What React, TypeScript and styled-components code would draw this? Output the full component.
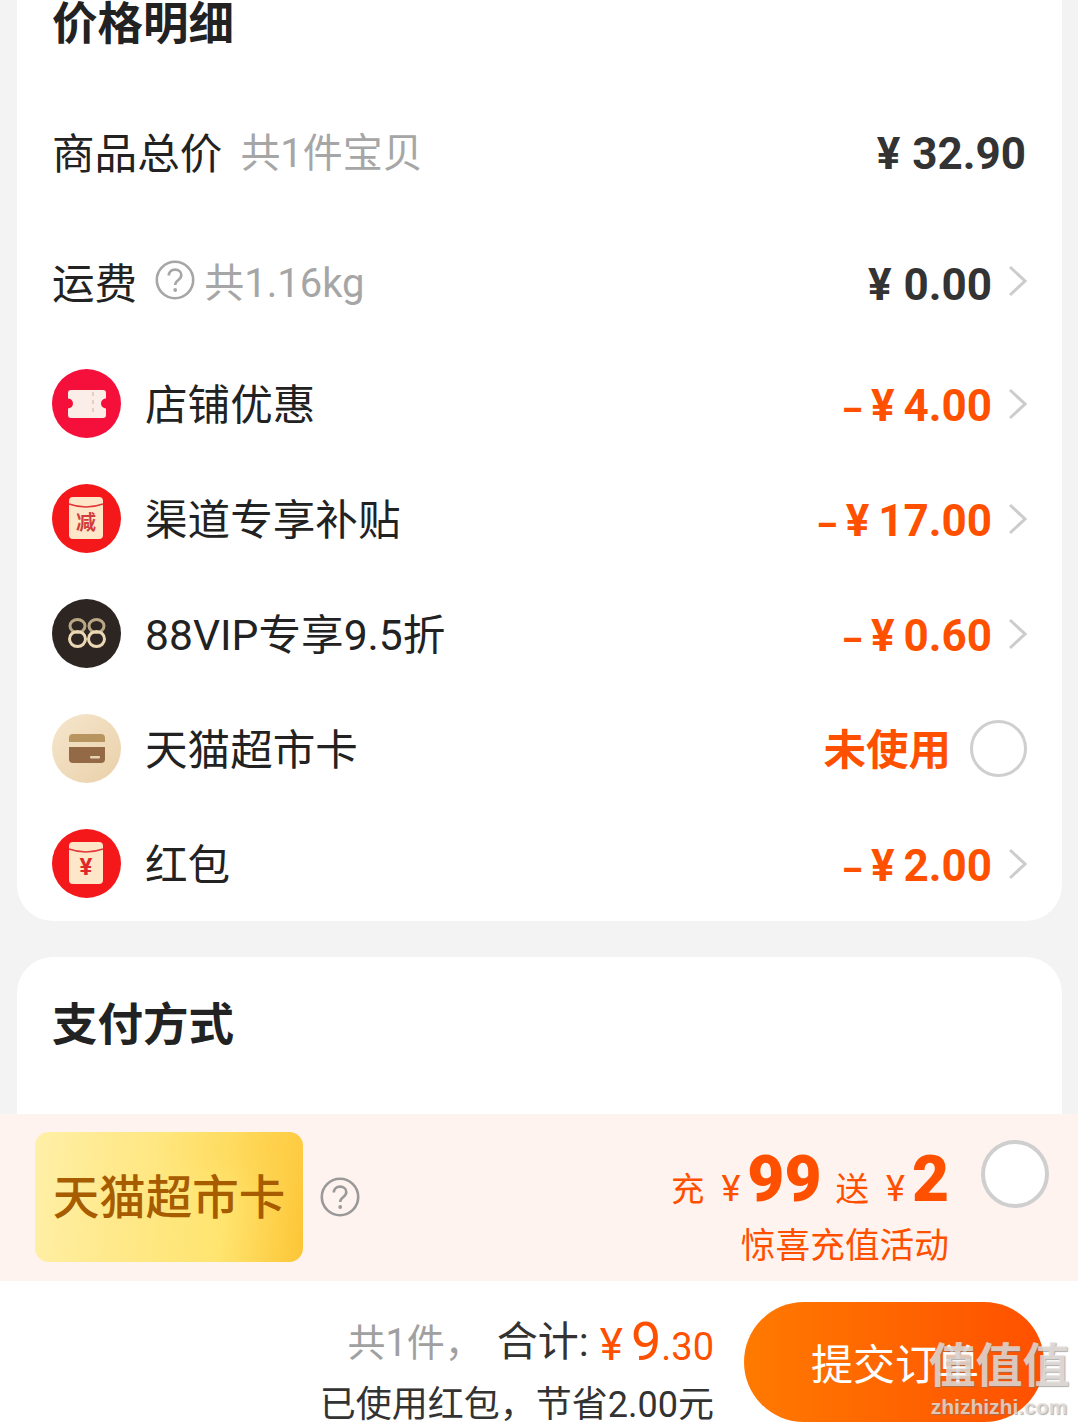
import React from "react";
import styled, { createGlobalStyle } from "styled-components";

const FONT = `Roboto, "Noto Sans CJK SC", sans-serif`;
const ORANGE = "#ff5000";

const GlobalStyle = createGlobalStyle`
  html, body { margin: 0; padding: 0; background: #f3f3f3; }
  * { box-sizing: border-box; }
`;

const Page = styled.div`
  position: relative;
  width: 1078px;
  height: 1424px;
  overflow: hidden;
  display: flex;
  flex-direction: column;
  font-family: ${FONT};
  background: #f3f3f3;
`;

const Scroll = styled.div`
  height: 1114px;
  flex: none;
  padding: 0 16px 0 17px;
  overflow: hidden;
  display: flex;
  flex-direction: column;
  gap: 36px;
`;

const PriceCard = styled.section`
  background: #fff;
  height: 921px;
  flex: none;
  border-radius: 0 0 36px 36px;
  padding: 0 36px 0 35px;
`;

const PayCard = styled.section`
  background: #fff;
  flex: 1;
  border-radius: 36px 36px 0 0;
  padding: 44px 36px 0 35px;
`;

const Title = styled.h2`
  margin: 0;
  padding-top: 4px;
  font-size: 45.5px;
  line-height: 42px;
  font-weight: 700;
  color: #222;
`;

const TopRow = styled.div<{ $top: number }>`
  height: 100px;
  margin-top: ${(p) => p.$top}px;
  display: flex;
  align-items: center;
`;

const Discounts = styled.div`
  margin-top: 13px;
`;

const Row = styled.div`
  height: 115px;
  display: flex;
  align-items: center;
`;

const Label = styled.span`
  font-size: 42.6px;
  line-height: 50px;
  margin-top: 2px;
  color: #222;
  font-weight: 400;
  white-space: nowrap;
`;

const RowLabel = styled(Label)`
  margin-top: 2px;
`;

const Note = styled.span`
  font-size: 40px;
  line-height: 50px;
  margin-top: 2px;
  color: #a6a6a6;
  white-space: nowrap;
  margin-left: 18px;
`;

const NoteTight = styled(Note)`
  margin-left: 9px;
`;

const IconSlot = styled.span`
  width: 69px;
  height: 69px;
  flex: none;
  margin-right: 24px;
`;

const SmallHelp = styled.svg`
  width: 40px;
  height: 40px;
  flex: none;
  margin-left: 18px;
  margin-top: -6px;
`;

const Amount = styled.span<{ $hot?: boolean }>`
  margin-left: auto;
  margin-top: ${(p) => (p.$hot ? 9 : 3)}px;
  font-weight: 700;
  font-size: 44px;
  line-height: 50px;
  word-spacing: ${(p) => (p.$hot ? -2 : 1)}px;
  color: ${(p) => (p.$hot ? ORANGE : "#333")};
  white-space: nowrap;
`;

const Dash = styled.span`
  font-size: 33px;
  font-weight: 900;
`;

const Chevron = styled.svg<{ $lift?: boolean }>`
  width: 18px;
  height: 32px;
  flex: none;
  margin-left: 17px;
  margin-right: -1px;
  margin-top: ${(p) => (p.$lift ? -4 : 0)}px;
`;

const Unused = styled.span`
  margin-left: auto;
  margin-top: 4px;
  font-size: 42.5px;
  font-weight: 700;
  color: ${ORANGE};
  line-height: 50px;
`;

const Radio = styled.span`
  width: 57px;
  height: 57px;
  flex: none;
  border-radius: 50%;
  border: 3px solid #cfcfcf;
  background: #fff;
  margin-left: 19px;
  margin-right: -1px;
`;

const PromoBar = styled.div`
  height: 167px;
  flex: none;
  background: #fff3ef;
  display: flex;
  align-items: flex-start;
  padding: 18px 29px 0 35px;
`;

const YellowCard = styled.div`
  width: 268px;
  height: 130px;
  flex: none;
  border-radius: 14px;
  padding-bottom: 8px;
  background:
    radial-gradient(120px 60px at 88% 12%, rgba(255, 205, 70, 0.55), transparent 100%),
    linear-gradient(96deg, #fff0a8 0%, #ffe98c 30%, #ffe46f 70%, #fdc535 100%);
  display: flex;
  align-items: center;
  justify-content: center;
  color: #a85c00;
  font-size: 46.5px;
  font-weight: 500;
  white-space: nowrap;
`;

const PromoHelp = styled.svg`
  width: 40px;
  height: 40px;
  flex: none;
  margin: 45px 0 0 17px;
`;

const PromoText = styled.div`
  margin-left: auto;
  display: flex;
  flex-direction: column;
  align-items: flex-end;
  color: ${ORANGE};
`;

const PromoLine = styled.div`
  height: 64px;
  margin-top: 16px;
  display: flex;
  align-items: baseline;
  white-space: nowrap;
`;

const PromoWord = styled.span`
  font-size: 33.5px;
  line-height: 64px;
  margin-left: 14px;
`;

const PromoYen = styled.span`
  font-size: 36px;
  font-weight: 400;
  margin-left: 17px;
  margin-right: 7px;
`;

const PromoBig = styled.span`
  font-weight: 900;
  font-size: 64px;
  line-height: 64px;
`;

const PromoSub = styled.div`
  font-size: 34.7px;
  line-height: 48px;
  margin-top: 10px;
`;

const BigRadio = styled.span`
  width: 68px;
  height: 68px;
  flex: none;
  border-radius: 50%;
  border: 4px solid #cfcfcf;
  background: #fff;
  margin: 8px 0 0 32px;
`;

const Footer = styled.footer`
  height: 143px;
  flex: none;
  overflow: hidden;
  background: #fff;
  display: flex;
  justify-content: flex-end;
  padding: 21px 34px 0 0;
  gap: 30px;
`;

const Totals = styled.div`
  display: flex;
  flex-direction: column;
  align-items: flex-end;
  margin-top: 4px;
`;

const TotalLine = styled.div`
  height: 56px;
  display: flex;
  align-items: baseline;
  white-space: nowrap;
`;

const Count = styled.span`
  font-size: 38px;
  color: #a0a0a0;
  margin-right: 14px;
`;

const Sum = styled.span`
  font-size: 41px;
  color: #333;
  margin-right: 11px;
`;

const Price = styled.span`
  display: inline-flex;
  align-items: baseline;
  color: ${ORANGE};
  transform: translateY(4px);
`;

const Yen = styled.span`
  font-size: 44px;
  margin-right: 8px;
`;

const BigNum = styled.span`
  font-size: 54px;
`;

const SmallNum = styled.span`
  font-size: 38px;
`;

const Saved = styled.div`
  font-size: 36px;
  line-height: 38px;
  color: #333;
  margin-top: 24px;
  white-space: nowrap;
`;

const Submit = styled.button`
  width: 300px;
  height: 120px;
  flex: none;
  border: 0;
  border-radius: 60px;
  background: linear-gradient(90deg, #ff7a00, #ff5000);
  color: #fff;
  font-family: ${FONT};
  font-size: 42px;
  text-align: left;
  padding: 0 0 2px 67px;
  white-space: nowrap;
`;

const Watermark = styled.div`
  position: absolute;
  left: 925px;
  top: 1338px;
  width: 148px;
  text-align: center;
  pointer-events: none;
`;

const MarkChars = styled.div`
  font-size: 47px;
  line-height: 56px;
  font-weight: 700;
  color: rgba(232, 226, 222, 0.8);
  text-shadow: 1px 1px 1px rgba(120, 120, 120, 0.6);
`;

const MarkUrl = styled.div`
  font-family: "Liberation Sans", sans-serif;
  font-size: 21px;
  line-height: 22px;
  margin-top: 2px;
  font-weight: 700;
  color: rgba(232, 226, 222, 0.8);
  text-shadow: 1px 1px 1px rgba(120, 120, 120, 0.6);
`;

const Arrow = ({ lift }: { lift?: boolean }) => (
  <Chevron viewBox="0 0 18 32" $lift={lift}>
    <path d="M1 2l15 14L1 30" fill="none" stroke="#cccccc" strokeWidth="3" />
  </Chevron>
);

const HelpGlyph = ({ color }: { color: string }) => (
  <>
    <circle cx="20" cy="20" r="18.2" fill="none" stroke={color} strokeWidth="2.6" />
    <path
      d="M13.8 15.6c0-3.7 2.7-6 6.3-6s6.2 2.3 6.2 5.5c0 2.5-1.4 3.8-3.2 5.1-1.9 1.4-2.9 2.4-2.9 4.8"
      fill="none"
      stroke={color}
      strokeWidth="2.6"
    />
    <circle cx="20.2" cy="30" r="1.9" fill={color} />
  </>
);

const TicketIcon = () => (
  <svg viewBox="0 0 69 69" width="69" height="69">
    <circle cx="34.5" cy="34.5" r="34.5" fill="#f5103c" />
    <path
      d="M19 21h32a3 3 0 0 1 3 3v5.500a5 5 0 0 0 0 10V46a3 3 0 0 1-3 3H19a3 3 0 0 1-3-3v-6.500a5 5 0 0 0 0-10V24a3 3 0 0 1 3-3z"
      fill="#fbeee8"
    />
    <path d="M41 23v24" stroke="#e8cfc4" strokeWidth="2" strokeDasharray="4 4" />
  </svg>
);

const ReduceIcon = () => (
  <svg viewBox="0 0 69 69" width="69" height="69">
    <circle cx="34.5" cy="34.5" r="34.5" fill="#f5181a" />
    <rect x="17" y="13" width="34" height="42" rx="4" fill="#fde7c8" />
    <path d="M17 20q17 6 34 0" fill="none" stroke="#e0383a" strokeWidth="1.6" />
    <text x="34" y="46" textAnchor="middle" fontSize="20" fontWeight="700" fill="#d23c3c" fontFamily={FONT}>
      减
    </text>
  </svg>
);

const VipIcon = () => (
  <svg viewBox="0 0 69 69" width="69" height="69">
    <circle cx="34.5" cy="34.5" r="34.5" fill="#2c2522" />
    <g fill="none" stroke="#b8a685" strokeWidth="3">
      <ellipse cx="25.500" cy="27" rx="7.500" ry="6.500" />
      <ellipse cx="44.500" cy="27" rx="7.500" ry="6.500" />
    </g>
    <g fill="none" stroke="#ecd8b4" strokeWidth="3">
      <ellipse cx="25.500" cy="40" rx="8" ry="7.500" />
      <ellipse cx="44.500" cy="40" rx="8" ry="7.500" />
    </g>
  </svg>
);

const CardIcon = () => (
  <svg viewBox="0 0 69 69" width="69" height="69">
    <defs>
      <linearGradient id="beige" x1="0" y1="0" x2="1" y2="1">
        <stop offset="0" stopColor="#f6e6cd" />
        <stop offset="1" stopColor="#e9d0a9" />
      </linearGradient>
    </defs>
    <circle cx="34.5" cy="34.5" r="34.5" fill="url(#beige)" />
    <path d="M21 20h28a4 4 0 0 1 4 4v4H17v-4a4 4 0 0 1 4-4z" fill="#b8945f" />
    <path d="M17 33h36v12a4 4 0 0 1-4 4H21a4 4 0 0 1-4-4z" fill="#936a45" />
    <rect x="38" y="42" width="10" height="2.500" rx="1" fill="#e8d2b4" />
  </svg>
);

const PacketIcon = () => (
  <svg viewBox="0 0 69 69" width="69" height="69">
    <circle cx="34.5" cy="34.5" r="34.5" fill="#f5181a" />
    <rect x="17" y="13" width="34" height="42" rx="4" fill="#fde7c8" />
    <path d="M17 20q17 6 34 0" fill="none" stroke="#e0383a" strokeWidth="1.6" />
    <text x="34" y="46" textAnchor="middle" fontSize="24" fontWeight="700" fill="#e0282a" fontFamily={FONT}>
      ¥
    </text>
  </svg>
);

const discounts = [
  { icon: <TicketIcon />, label: "店铺优惠", amount: "¥ 4.00" },
  { icon: <ReduceIcon />, label: "渠道专享补贴", amount: "¥ 17.00" },
  { icon: <VipIcon />, label: "88VIP专享9.5折", amount: "¥ 0.60" },
  { icon: <CardIcon />, label: "天猫超市卡", amount: null },
  { icon: <PacketIcon />, label: "红包", amount: "¥ 2.00" },
];

const App: React.FC = () => {
  return (
    <Page>
      <GlobalStyle />
      <Scroll>
        <PriceCard>
          <Title>价格明细</Title>
          <TopRow $top={56.5}>
            <Label>商品总价</Label>
            <Note>共1件宝贝</Note>
            <Amount>¥ 32.90</Amount>
          </TopRow>
          <TopRow $top={30.5}>
            <Label>运费</Label>
            <SmallHelp viewBox="0 0 40 40">
              <HelpGlyph color="#a6a6a6" />
            </SmallHelp>
            <NoteTight>共1.16kg</NoteTight>
            <Amount>¥ 0.00</Amount>
            <Arrow lift />
          </TopRow>
          <Discounts>
            {discounts.map((d) => (
              <Row key={d.label}>
                <IconSlot>{d.icon}</IconSlot>
                <RowLabel>{d.label}</RowLabel>
                {d.amount ? (
                  <>
                    <Amount $hot>
                      <Dash>–</Dash> {d.amount}
                    </Amount>
                    <Arrow />
                  </>
                ) : (
                  <>
                    <Unused>未使用</Unused>
                    <Radio />
                  </>
                )}
              </Row>
            ))}
          </Discounts>
        </PriceCard>
        <PayCard>
          <Title>支付方式</Title>
        </PayCard>
      </Scroll>
      <PromoBar>
        <YellowCard>天猫超市卡</YellowCard>
        <PromoHelp viewBox="0 0 40 40">
          <HelpGlyph color="#999999" />
        </PromoHelp>
        <PromoText>
          <PromoLine>
            <PromoWord>充</PromoWord>
            <PromoYen>¥</PromoYen>
            <PromoBig>99</PromoBig>
            <PromoWord>送</PromoWord>
            <PromoYen>¥</PromoYen>
            <PromoBig>2</PromoBig>
          </PromoLine>
          <PromoSub>惊喜充值活动</PromoSub>
        </PromoText>
        <BigRadio />
      </PromoBar>
      <Footer>
        <Totals>
          <TotalLine>
            <Count>共1件，</Count>
            <Sum>合计:</Sum>
            <Price>
              <Yen>¥</Yen>
              <BigNum>9</BigNum>
              <SmallNum>.30</SmallNum>
            </Price>
          </TotalLine>
          <Saved>已使用红包，节省2.00元</Saved>
        </Totals>
        <Submit>提交订单</Submit>
      </Footer>
      <Watermark>
        <MarkChars>值值值</MarkChars>
        <MarkUrl>zhizhizhi.com</MarkUrl>
      </Watermark>
    </Page>
  );
};

export default App;
